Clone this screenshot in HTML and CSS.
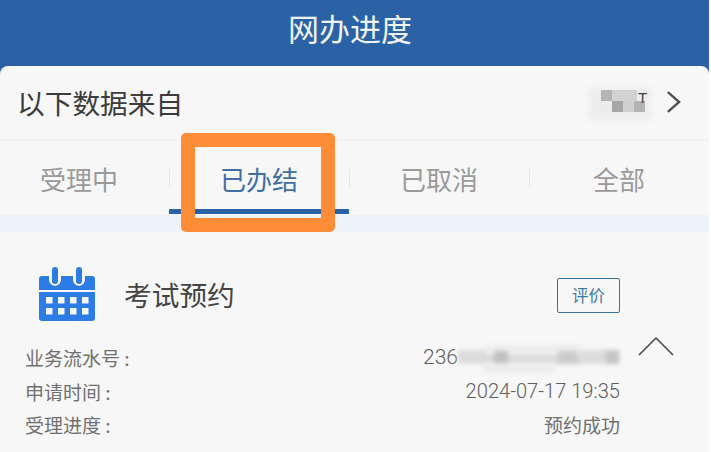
FILE: index.html
```html
<!DOCTYPE html>
<html lang="zh-CN">
<head>
<meta charset="utf-8">
<title>网办进度</title>
<link rel="stylesheet" href="styles.css">
</head>
<body>
<div class="page">
  <header class="topbar"><h1 class="topbar-title">网办进度</h1></header>
  <main class="sheet">
    <section class="source">
      <span class="source-label">以下数据来自</span>
      <span class="source-right">
        <span class="mosaic">
          <i class="m m1"></i><i class="m m2"></i><i class="m m3"></i><i class="m m4"></i><i class="m m5"></i><i class="m m6"></i>
          <b class="mosaic-t">T</b>
        </span>
        <svg class="chev-right" viewBox="0 0 16 24"><path d="M2 1.500l12 10.500L2 22.500" fill="none" stroke="#505050" stroke-width="2.500"/></svg>
      </span>
    </section>
    <nav class="tabs">
      <div class="tab"><span>受理中</span></div>
      <div class="tab tab-active"><span>已办结</span></div>
      <div class="tab"><span>已取消</span></div>
      <div class="tab"><span>全部</span></div>
    </nav>
    <div class="band"></div>
    <section class="card">
      <div class="card-head">
        <svg class="cal" viewBox="0 0 56 56">
          <path d="M3 10h7v3c0 9 12 9 12 0v-3h12v3c0 9 12 9 12 0v-3h7a3 3 0 0 1 3 3v11H0V13a3 3 0 0 1 3-3z" fill="#2d7be5"/>
          <path d="M0 26h56v26a3 3 0 0 1-3 3H3a3 3 0 0 1-3-3z" fill="#2d7be5"/>
          <rect x="13" y="1" width="6" height="17" rx="3" fill="#2d7be5"/>
          <rect x="37" y="1" width="6" height="17" rx="3" fill="#2d7be5"/>
          <g fill="#f4f8fc">
            <rect x="7" y="31" width="6.500" height="6.500"/><rect x="19" y="31" width="6.500" height="6.500"/><rect x="31" y="31" width="6.500" height="6.500"/><rect x="43" y="31" width="6.500" height="6.500"/>
            <rect x="7" y="42" width="6.500" height="6.500"/><rect x="19" y="42" width="6.500" height="6.500"/><rect x="31" y="42" width="6.500" height="6.500"/><rect x="43" y="42" width="6.500" height="6.500"/>
          </g>
        </svg>
        <span class="card-title">考试预约</span>
        <span class="rate">评价</span>
      </div>
      <div class="rows">
        <div class="row"><span>业务流水号 :</span><span class="serial">236<span class="smear"><i class="s s1"></i><i class="s s2"></i><i class="s s3"></i><i class="s s4"></i><i class="s s5"></i><i class="s s6"></i></span></span></div>
        <div class="row"><span>申请时间 :</span><span class="num">2024-07-17 19:35</span></div>
        <div class="row"><span>受理进度 :</span><span>预约成功</span></div>
      </div>
      <svg class="chev-up" viewBox="0 0 36 20"><path d="M1 19L18 2l17 17" fill="none" stroke="#444" stroke-width="1.500"/></svg>
    </section>
  </main>
  <div class="callout"></div>
</div>
</body>
</html>
```
FILE: styles.css
```css
* { box-sizing: border-box; }
html, body { margin: 0; padding: 0; background: #fff; }
body { width: 711px; height: 452px; overflow: hidden; font-family: "Noto Sans CJK SC", "Noto Sans", sans-serif; }
.page { position: relative; width: 709px; height: 452px; overflow: hidden; background: #2a62a5; }

.topbar { height: 66px; display: flex; justify-content: center; align-items: center; padding-bottom: 10px; padding-right: 9px; }
.topbar-title { margin: 0; color: #eef3f9; font-size: 31px; font-weight: 400; line-height: 40px; }

.sheet { background: #f7f7f7; border-radius: 8px 8px 0 0; height: 386px; }

.source { height: 75px; padding: 0 28px 2px 17px; display: flex; justify-content: space-between; align-items: center; border-bottom: 2px solid #f0f3f6; }
.source-label { font-size: 27.7px; color: #3c3c3c; line-height: 40px; }
.source-right { display: flex; align-items: center; gap: 15px; }
.mosaic { position: relative; display: block; width: 62px; height: 32px; top: 2px; }
.m { position: absolute; display: block; filter: blur(.6px); }
.m1 { left: 0; top: 0; width: 62px; height: 32px; background: #ececec; filter: blur(3px); }
.m2 { left: 12px; top: 2px; width: 11px; height: 11px; background: #b5b5b5; }
.m3 { left: 23px; top: 2px; width: 25px; height: 11px; background: #d2d2d2; }
.m4 { left: 23px; top: 13px; width: 11px; height: 11px; background: #a6a6a6; }
.m5 { left: 34px; top: 13px; width: 11px; height: 11px; background: #cfcfcf; }
.m6 { left: 45px; top: 13px; width: 11px; height: 11px; background: #b3b3b3; }
.mosaic-t { position: absolute; left: 49px; top: 0; font-size: 15px; line-height: 20px; font-weight: 400; color: #444; font-family: "Liberation Sans", sans-serif; }
.chev-right { width: 15px; height: 24px; display: block; }

.tabs { display: grid; grid-template-columns: repeat(4, 180px); margin-left: -11px; height: 74px; }
.tab { position: relative; display: flex; justify-content: center; align-items: center; padding-top: 2px; font-size: 26px; line-height: 36px; color: #9a9a9a; }
.tab + .tab::before { content: ""; position: absolute; left: 0; top: 28px; width: 1px; height: 18px; background: #e6e6e6; }
.tab-active { color: #3f6fa3; border-bottom: 5px solid #2a62a5; height: 73px; padding-top: 7px; }

.band { height: 17px; background: #edf2f6; }

.card { position: relative; padding: 34px 89px 0 25px; }
.card-head { display: flex; align-items: center; height: 56px; padding-left: 14px; }
.cal { width: 56px; height: 56px; display: block; flex: none; }
.card-title { margin-left: 29px; font-size: 27.7px; line-height: 40px; color: #444; }
.rate { margin-left: auto; margin-top: 3px; width: 63px; height: 35px; border: 1.500px solid #39709f; border-radius: 2px; color: #3f77a6; font-size: 16.500px; line-height: 32px; text-align: center; }

.rows { margin-top: 19px; }
.row { display: flex; justify-content: space-between; height: 33.500px; line-height: 33.500px; font-size: 19px; color: #707070; font-family: "Noto Sans CJK SC", sans-serif; }
.num { font-family: "Roboto", sans-serif; font-size: 20.100px; font-weight: 300; color: #5e5e5e; }
.serial { display: flex; align-items: center; width: 197px; font-family: "Roboto", sans-serif; font-size: 21px; font-weight: 300; color: #5e5e5e; }
.smear { position: relative; display: block; flex: 1; height: 30px; }
.s { position: absolute; display: block; filter: blur(2px); }
.s1 { left: 0; top: 7px; width: 162px; height: 14px; background: #dcdcdc; }
.s2 { left: 28px; top: 2px; width: 95px; height: 10px; background: #ededed; }
.s3 { left: 26px; top: 20px; width: 70px; height: 10px; background: #ececec; }
.s4 { left: 36px; top: 8px; width: 14px; height: 12px; background: #c0c0c0; }
.s5 { left: 100px; top: 8px; width: 20px; height: 12px; background: #cccccc; }
.s6 { left: 148px; top: 8px; width: 12px; height: 12px; background: #c4c4c4; }

.chev-up { position: absolute; left: 638px; top: 104px; width: 36px; height: 20px; }

.callout { position: absolute; left: 181px; top: 133px; width: 154px; height: 99px; border: 14px solid #ff8c37; border-radius: 5px; }
```
